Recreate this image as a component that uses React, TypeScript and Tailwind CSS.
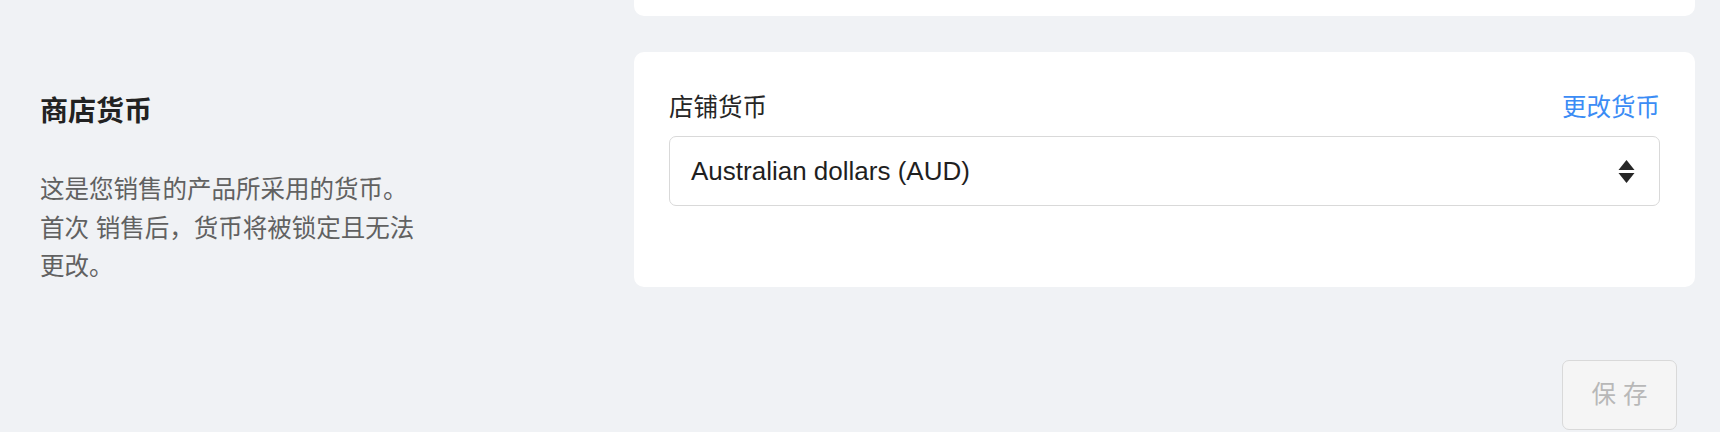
import React, { useState } from 'react';

const currencies = [
  { code: 'AUD', label: 'Australian dollars (AUD)' },
  { code: 'USD', label: 'US dollars (USD)' },
  { code: 'CNY', label: 'Chinese yuan (CNY)' },
];

const SortArrows = () => (
  <svg width="17" height="23" viewBox="0 0 17 23" className="shrink-0">
    <path d="M8.5 0 L16.5 10 L0.5 10 Z" fill="#262626" />
    <path d="M0.5 13 L16.5 13 L8.5 23 Z" fill="#262626" />
  </svg>
);

const StoreCurrency = () => {
  const [currency] = useState('AUD');
  const current = currencies.find(c => c.code === currency);

  return (
    <div className="flex items-start pl-[40px] pr-[25px] mt-[36px]">
      <div className="w-[594px] shrink-0 pt-[39px]">
        <h2 className="text-[28px] leading-[42px] font-bold text-[#222]">商店货币</h2>
        <p className="mt-[38px] w-[386px] text-[24.5px] leading-[38.5px] text-[#616161]">
          这是您销售的产品所采用的货币。首次 销售后，货币将被锁定且无法更改。
        </p>
      </div>

      <div className="flex-1 bg-white rounded-[10px] px-[35px] pt-[37px] pb-[81px]">
        <div className="flex items-center justify-between mb-[8.5px]">
          <span className="text-[24.5px] leading-[38.5px] text-[#262626]">店铺货币</span>
          <button className="text-[24.5px] leading-[38.5px] text-[#3b8cf5]">更改货币</button>
        </div>
        <div className="h-[70px] flex items-center justify-between border border-[#d9d9d9] rounded-[7px] pl-[21px] pr-[24px]">
          <span className="text-[26px] text-[#1f1f1f]">{current?.label}</span>
          <SortArrows />
        </div>
      </div>
    </div>
  );
};

export default function App() {
  return (
    <div
      className="min-h-screen bg-[#f0f2f5] overflow-hidden"
      style={{ fontFamily: '"Liberation Sans", "Noto Sans CJK SC", sans-serif' }}
    >
      <div className="flex pl-[40px] pr-[25px]">
        <div className="w-[594px] shrink-0" />
        <div className="flex-1 h-[16px] bg-white rounded-b-[10px]" />
      </div>

      <StoreCurrency />

      <div className="flex justify-end pr-[43px] mt-[73px]">
        <button
          disabled
          className="w-[115px] h-[70px] rounded-[7px] border border-[#d9d9d9] bg-[#f5f5f5] text-[24.5px] text-[#b8b8b8]"
        >
          保 存
        </button>
      </div>
    </div>
  );
}
